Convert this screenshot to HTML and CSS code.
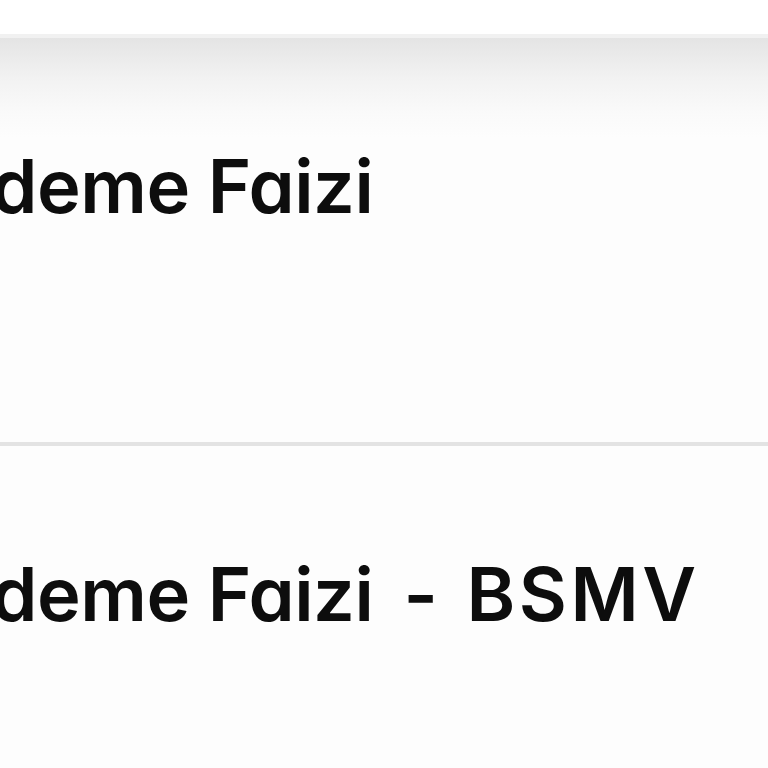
FILE: index.html
```html
<!DOCTYPE html>
<html lang="tr">
<head>
<meta charset="utf-8">
<link rel="stylesheet" href="styles.css">
</head>
<body>
<div class="page">
  <div class="topbar"></div>
  <div class="list">
    <div class="row row-first">
      <span class="label">Ödeme Faizi</span>
    </div>
    <div class="row">
      <span class="label">Ödeme Faizi<span class="dash"> - </span><span class="code">BSMV</span></span>
    </div>
  </div>
</div>
</body>
</html>
```

FILE: styles.css
```css
html, body {
  margin: 0;
  padding: 0;
  background: #fdfdfd;
  overflow: hidden;
}
.page {
  width: 768px;
  height: 768px;
  overflow: hidden;
  display: flex;
  flex-direction: column;
}
.topbar {
  height: 34px;
  background: #ffffff;
  border-bottom: 4px solid #f1f1f1;
  flex: none;
}
.list {
  display: flex;
  flex-direction: column;
}
.row {
  height: 408px;
  box-sizing: border-box;
  padding-top: 108px;
  border-bottom: 4px solid #e3e3e3;
  background: #fdfdfd;
  flex: none;
}
.row-first {
  background: linear-gradient(to bottom, #e4e4e4 0px, #f2f2f2 40px, #fafafa 75px, #fdfdfd 100px);
}
.label {
  display: block;
  margin-left: -65px;
  font-family: "Inter", "Noto Sans", sans-serif;
  font-feature-settings: "cv11";
  font-weight: 600;
  font-size: 74px;
  line-height: 80px;
  letter-spacing: -0.5px;
  color: #0d0d0d;
  white-space: nowrap;
}
.dash {
  margin-left: 12px;
}
.code {
  margin-left: 11px;
  letter-spacing: 3.5px;
}
```
